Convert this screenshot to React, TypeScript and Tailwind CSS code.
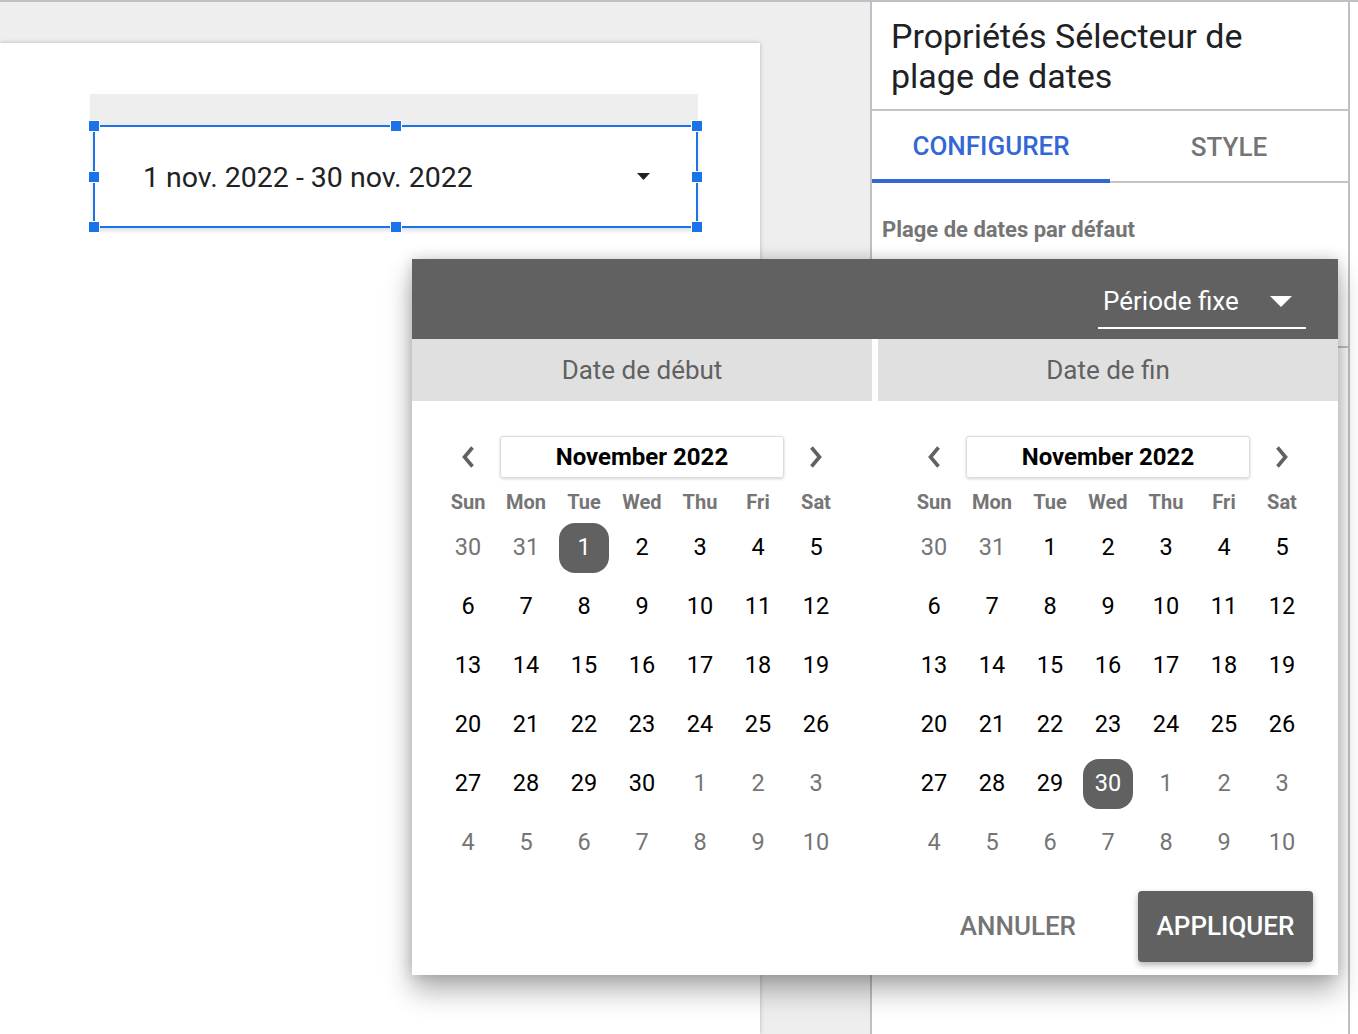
import React from "react";

const DAYS = ["Sun", "Mon", "Tue", "Wed", "Thu", "Fri", "Sat"];

type Cell = { d: number; cur: boolean };

function buildCells(): Cell[] {
  const cells: Cell[] = [{ d: 30, cur: false }, { d: 31, cur: false }];
  for (let i = 1; i <= 30; i++) cells.push({ d: i, cur: true });
  for (let i = 1; i <= 10; i++) cells.push({ d: i, cur: false });
  return cells;
}

function Chevron({ dir }: { dir: "left" | "right" }) {
  return (
    <svg width="16" height="26" viewBox="0 0 16 26">
      <path
        d={dir === "left" ? "M12.5 3.5 L4.5 13 L12.5 22.5" : "M3.5 3.5 L11.5 13 L3.5 22.5"}
        fill="none"
        stroke="#616161"
        strokeWidth="3.6"
        strokeLinecap="butt"
        strokeLinejoin="miter"
      />
    </svg>
  );
}

function Calendar({ selected }: { selected: number }) {
  const cells = buildCells();
  return (
    <div className="w-[460px] flex flex-col items-center pt-[35px]">
      <div className="w-[406px] grid grid-cols-[58px_1fr_58px] items-center h-[42px]">
        <div className="flex justify-center">
          <Chevron dir="left" />
        </div>
        <div className="flex justify-center">
          <div className="w-[284px] h-[42px] border border-[#dadce0] rounded-[3px] shadow-[0_1px_3px_rgba(0,0,0,0.18)] flex items-center justify-center text-[24px] font-bold text-black">
            November 2022
          </div>
        </div>
        <div className="flex justify-center">
          <Chevron dir="right" />
        </div>
      </div>
      <div className="w-[406px] grid grid-cols-7 mt-[9px] h-[30px] items-center">
        {DAYS.map((d) => (
          <div key={d} className="text-center text-[20px] font-bold text-[#757575]">
            {d}
          </div>
        ))}
      </div>
      <div className="w-[406px] grid grid-cols-7 auto-rows-[59px] mt-[1px]">
        {cells.map((c, i) => {
          const isSel = c.cur && c.d === selected;
          return (
            <div key={i} className="flex items-center justify-center">
              {isSel ? (
                <div className="w-[50px] h-[50px] rounded-[16px] bg-[#616161] text-white flex items-center justify-center text-[23.5px]">
                  {c.d}
                </div>
              ) : (
                <span className={"text-[23.5px] " + (c.cur ? "text-black" : "text-[#757575]")}>{c.d}</span>
              )}
            </div>
          );
        })}
      </div>
    </div>
  );
}

function Handle({ className }: { className: string }) {
  return (
    <div
      className={
        "absolute w-[12px] h-[12px] bg-[#1a73e8] border border-white -translate-x-1/2 -translate-y-1/2 " + className
      }
    />
  );
}

export default function App() {
  return (
    <div
      className="relative w-[1358px] h-[1034px] overflow-hidden bg-[#eeeeee] border-t-2 border-[#bdc1c6] flex"
      style={{ fontFamily: "Roboto, 'Liberation Sans', sans-serif" }}
    >
      {/* Canvas */}
      <div className="w-[870px] flex flex-col pt-[41px]">
        <div className="w-[760px] flex-1 bg-white shadow-[0_0_4px_rgba(0,0,0,0.25)] pt-[51px] pl-[90px]">
          <div className="w-[608px] h-[31px] bg-[#eeeeee]" />
          <div className="relative w-[605px] h-[103px] ml-[3px] border-2 border-[#1a73e8] shadow-[0_3px_4px_rgba(0,0,0,0.12)] flex items-center pl-[48px] pr-[46px]">
            <span className="text-[28.5px] text-[#202124] flex-1 pt-[3px]">1 nov. 2022 - 30 nov. 2022</span>
            <svg width="13" height="8" viewBox="0 0 13 8">
              <path d="M0 0 L13 0 L6.5 7 Z" fill="#202124" />
            </svg>
            <Handle className="left-[-1px] top-[-1px]" />
            <Handle className="left-1/2 top-[-1px]" />
            <Handle className="left-[calc(100%+1px)] top-[-1px]" />
            <Handle className="left-[-1px] top-1/2" />
            <Handle className="left-[calc(100%+1px)] top-1/2" />
            <Handle className="left-[-1px] top-[calc(100%+1px)]" />
            <Handle className="left-1/2 top-[calc(100%+1px)]" />
            <Handle className="left-[calc(100%+1px)] top-[calc(100%+1px)]" />
          </div>
        </div>
      </div>

      {/* Right panel */}
      <div className="w-[488px] flex bg-white border-l-2 border-[#bdc1c6]">
        <div className="w-[478px] flex flex-col border-r-2 border-[#bdc1c6]">
          <div className="h-[109px] border-b-2 border-[#c4c4c4] pl-[19px] pt-[14px] text-[34px] leading-[40px] text-[#202124]">
            Propriétés Sélecteur de
            <br />
            plage de dates
          </div>
          <div className="flex h-[72px] border-b-2 border-[#c4c4c4]">
            <div className="w-[238px] flex items-center justify-center pt-[2px] text-[26px] font-medium text-[#3367d6] border-b-4 border-[#3367d6] -mb-[2px]">
              CONFIGURER
            </div>
            <div className="flex-1 flex items-center justify-center pt-[2px] text-[26px] font-medium text-[#757575]">
              STYLE
            </div>
          </div>
          <div className="pl-[10px] pt-[30px] text-[22px] font-bold text-[#757575]">Plage de dates par défaut</div>
          <div className="mt-[100px] ml-auto w-[12px] border-t-2 border-[#c4c4c4]" />
        </div>
        <div className="flex-1 bg-white" />
      </div>

      {/* Popup */}
      <div className="absolute left-[412px] top-[257px] w-[926px] h-[716px] bg-white flex flex-col shadow-[0_16px_26px_rgba(0,0,0,0.3),0_0_14px_rgba(0,0,0,0.18)]">
        <div className="h-[80px] bg-[#616161] flex justify-end items-end pr-[32px] pb-[10px]">
          <div className="w-[208px] h-[54px] border-b-2 border-white flex items-center justify-between pl-[5px] pr-[14px]">
            <span className="text-[26px] text-white">Période fixe</span>
            <svg width="22" height="11" viewBox="0 0 22 11">
              <path d="M0 0 L22 0 L11 11 Z" fill="white" />
            </svg>
          </div>
        </div>
        <div className="flex h-[62px] gap-[6px]">
          <div className="flex-1 bg-[#e0e0e0] flex items-center justify-center text-[26px] text-[#616161]">
            Date de début
          </div>
          <div className="flex-1 bg-[#e0e0e0] flex items-center justify-center text-[26px] text-[#616161]">
            Date de fin
          </div>
        </div>
        <div className="flex gap-[6px]">
          <Calendar selected={1} />
          <Calendar selected={30} />
        </div>
        <div className="flex justify-end items-center pr-[25px] mt-[19px]">
          <div className="text-[26px] font-medium text-[#757575] mr-[62px]">ANNULER</div>
          <div className="w-[175px] h-[71px] rounded-[4px] bg-[#616161] text-white text-[26px] font-medium flex items-center justify-center shadow-[0_3px_6px_rgba(0,0,0,0.3)]">
            APPLIQUER
          </div>
        </div>
      </div>
    </div>
  );
}
